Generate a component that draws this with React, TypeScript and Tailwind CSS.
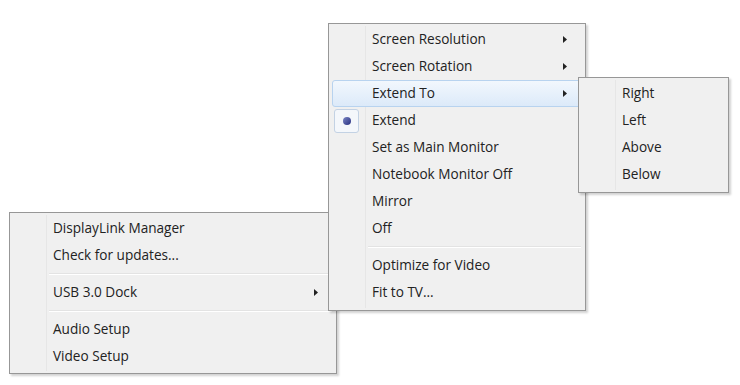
import React from "react";

type Item =
  | { kind: "item"; label: string; sub?: boolean; active?: boolean; checked?: boolean }
  | { kind: "sep" };

const mainItems: Item[] = [
  { kind: "item", label: "Screen Resolution", sub: true },
  { kind: "item", label: "Screen Rotation", sub: true },
  { kind: "item", label: "Extend To", sub: true, active: true },
  { kind: "item", label: "Extend", checked: true },
  { kind: "item", label: "Set as Main Monitor" },
  { kind: "item", label: "Notebook Monitor Off" },
  { kind: "item", label: "Mirror" },
  { kind: "item", label: "Off" },
  { kind: "sep" },
  { kind: "item", label: "Optimize for Video" },
  { kind: "item", label: "Fit to TV..." },
];

const extendItems: Item[] = [
  { kind: "item", label: "Right" },
  { kind: "item", label: "Left" },
  { kind: "item", label: "Above" },
  { kind: "item", label: "Below" },
];

const trayItems: Item[] = [
  { kind: "item", label: "DisplayLink Manager" },
  { kind: "item", label: "Check for updates..." },
  { kind: "sep" },
  { kind: "item", label: "USB 3.0 Dock", sub: true },
  { kind: "sep" },
  { kind: "item", label: "Audio Setup" },
  { kind: "item", label: "Video Setup" },
];

function Arrow() {
  return (
    <svg width="4" height="7" viewBox="0 0 4 7" className="shrink-0">
      <path d="M0 0 L4 3.5 L0 7 Z" fill="#222" />
    </svg>
  );
}

function MenuRow({ item }: { item: Item }) {
  if (item.kind === "sep") {
    return (
      <div className="h-[10px] flex flex-col justify-center pl-[39px] pr-[4px]">
        <div className="h-px bg-[#e3e3e3]" />
        <div className="h-px bg-white" />
      </div>
    );
  }
  return (
    <div
      className={
        "relative h-[27px] flex items-center mx-[3px] pl-[39px] pr-[14px] rounded-[3px] border " +
        (item.active
          ? "border-[#b8d3ef] bg-gradient-to-b from-[#f2f7fd] to-[#dceaf9]"
          : "border-transparent")
      }
    >
      {item.checked && (
        <div className="absolute left-[1px] top-[1px] w-[25px] h-[24px] rounded-[3px] border border-[#c3d2e4] bg-[#f4f7fb] flex items-center justify-center">
          <div className="w-[8px] h-[8px] rounded-full bg-gradient-to-br from-[#7c85c4] to-[#2a2f80]" />
        </div>
      )}
      <span className="flex-1 whitespace-nowrap">{item.label}</span>
      {item.sub && <Arrow />}
    </div>
  );
}

function Menu({ items, className }: { items: Item[]; className: string }) {
  return (
    <div
      className={
        "absolute bg-[#f0f0f0] border border-[#979797] shadow-[2px_2px_2px_rgba(0,0,0,0.18)] py-[2px] " +
        className
      }
    >
      <div className="absolute left-[36px] top-[2px] bottom-[2px] w-[2px] border-l border-[#e6e6e6]" />
      <div className="relative flex flex-col">
        {items.map((it, i) => (
          <MenuRow key={i} item={it} />
        ))}
      </div>
    </div>
  );
}

export default function App() {
  return (
    <div
      className="relative w-[740px] h-[385px] bg-white overflow-hidden text-[13.6px] text-[#222]"
      style={{ fontFamily: '"Open Sans", "Noto Sans", sans-serif' }}
    >
      <Menu items={trayItems} className="left-[9px] top-[212px] w-[328px] h-[162px] pt-[2px]" />
      <Menu items={mainItems} className="left-[328px] top-[23px] w-[258px] h-[288px]" />
      <Menu items={extendItems} className="left-[578px] top-[77px] w-[151px] h-[116px]" />
    </div>
  );
}
